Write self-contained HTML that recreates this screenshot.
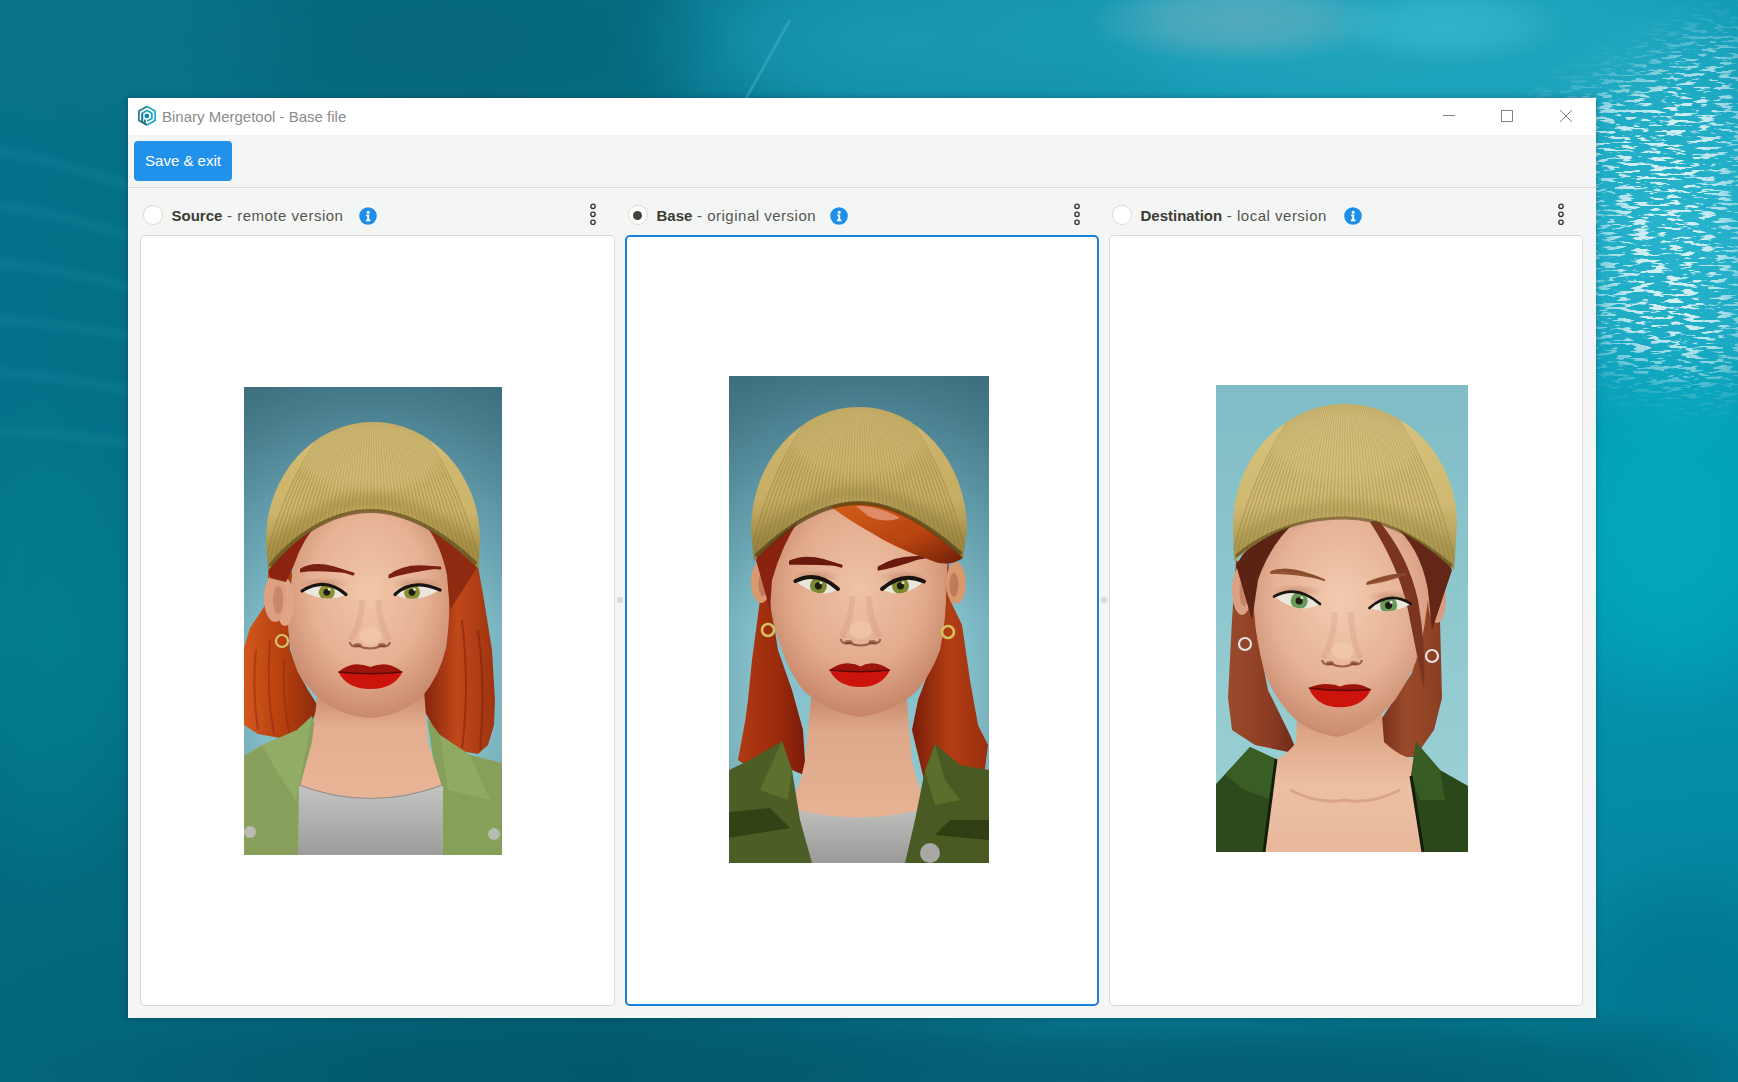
<!DOCTYPE html>
<html><head><meta charset="utf-8">
<style>
*{margin:0;padding:0;box-sizing:border-box}
html,body{width:1738px;height:1082px;overflow:hidden}
body{position:relative;font-family:"Liberation Sans",sans-serif;background:#0c6a80}
.abs{position:absolute}
#bg{left:0;top:0;width:1738px;height:1082px}
#win{left:128px;top:98px;width:1468px;height:920px;background:#f4f6f5;box-shadow:0 0 6px rgba(0,30,40,.35)}
#title{left:0;top:0;width:1468px;height:37px;background:#fff}
#ttext{left:34px;top:10px;font-size:15px;color:#8c8c8c;white-space:nowrap;letter-spacing:0}
#btn{left:6px;top:43px;width:98px;height:40px;background:#2192ec;border-radius:4px;color:#fff;font-size:15px;line-height:40px;text-align:center}
#sep{left:0;top:89px;width:1468px;height:1px;background:#dadada}
.panel{top:137px;height:771px;width:475px;background:#fff;border:1px solid #d9d9d9;border-radius:5px}
.hdr{top:108px;height:24px;line-height:20px;font-size:15px;color:#55554d;white-space:nowrap}
.hdr b{color:#3b3b33}
.hdr .rg{font-size:15px;letter-spacing:0.5px}
.radio{width:20px;height:20px;border-radius:50%;border:1px solid #dcdad0;background:#fff}
.info{width:18px;height:18px;border-radius:50%;background:#1f8ee8}
.grip{width:6px;height:6px;border-radius:50%;background:#d6d6d6}
</style></head><body>
<svg id="bg" class="abs" width="1738" height="1082" viewBox="0 0 1738 1082">
<defs>
<filter id="foam" x="0" y="0" width="100%" height="100%">
<feTurbulence type="fractalNoise" baseFrequency="0.06 0.3" numOctaves="3" seed="5" result="n"/>
<feColorMatrix in="n" type="matrix" values="0 0 0 0 1  0 0 0 0 1  0 0 0 0 1  0 0 0 12 -6.4" result="m"/>
<feComposite in="m" in2="SourceGraphic" operator="in"/>
</filter>
<filter id="wblur" x="-20%" y="-50%" width="140%" height="200%"><feGaussianBlur stdDeviation="3"/></filter>
<filter id="mblur" x="-30%" y="-30%" width="160%" height="160%"><feGaussianBlur stdDeviation="25"/></filter>
<linearGradient id="bgH" x1="0" y1="0" x2="1" y2="0"><stop offset="0" stop-color="#04728a"/><stop offset=".35" stop-color="#046c82"/><stop offset=".6" stop-color="#0a84a0"/><stop offset=".85" stop-color="#0694b0"/><stop offset="1" stop-color="#0492ae"/></linearGradient>
<linearGradient id="bgV" x1="0" y1="0" x2="0" y2="1"><stop offset="0" stop-color="#000" stop-opacity="0"/><stop offset=".6" stop-color="#000" stop-opacity="0"/><stop offset="1" stop-color="#00303a" stop-opacity=".18"/></linearGradient>
<mask id="foamMask" maskUnits="userSpaceOnUse" x="1300" y="0" width="438" height="500"><g filter="url(#mblur)"><path d="M1520 140 L1738 30 L1738 130 L1600 170 Z" fill="#fff"/><path d="M1600 110 L1738 90 L1738 380 L1600 360 Z" fill="#fff"/></g></mask>
<radialGradient id="b1"><stop offset="0" stop-color="#22a6be" stop-opacity="1"/><stop offset=".5" stop-color="#22a6be" stop-opacity="0.75"/><stop offset="1" stop-color="#22a6be" stop-opacity="0"/></radialGradient><radialGradient id="b2"><stop offset="0" stop-color="#1a9cb4" stop-opacity="0.9"/><stop offset=".5" stop-color="#1a9cb4" stop-opacity="0.675"/><stop offset="1" stop-color="#1a9cb4" stop-opacity="0"/></radialGradient><radialGradient id="b3"><stop offset="0" stop-color="#07667c" stop-opacity="0.9"/><stop offset=".5" stop-color="#07667c" stop-opacity="0.675"/><stop offset="1" stop-color="#07667c" stop-opacity="0"/></radialGradient><radialGradient id="b4"><stop offset="0" stop-color="#0d728a" stop-opacity="0.8"/><stop offset=".5" stop-color="#0d728a" stop-opacity="0.6000000000000001"/><stop offset="1" stop-color="#0d728a" stop-opacity="0"/></radialGradient><radialGradient id="b5"><stop offset="0" stop-color="#2cb8d0" stop-opacity="0.9"/><stop offset=".5" stop-color="#2cb8d0" stop-opacity="0.675"/><stop offset="1" stop-color="#2cb8d0" stop-opacity="0"/></radialGradient><radialGradient id="b6"><stop offset="0" stop-color="#02566a" stop-opacity="0.8"/><stop offset=".5" stop-color="#02566a" stop-opacity="0.6000000000000001"/><stop offset="1" stop-color="#02566a" stop-opacity="0"/></radialGradient><radialGradient id="b7"><stop offset="0" stop-color="#006e88" stop-opacity="0.6"/><stop offset=".5" stop-color="#006e88" stop-opacity="0.44999999999999996"/><stop offset="1" stop-color="#006e88" stop-opacity="0"/></radialGradient><radialGradient id="b8"><stop offset="0" stop-color="#02808f" stop-opacity="0.7"/><stop offset=".5" stop-color="#02808f" stop-opacity="0.5249999999999999"/><stop offset="1" stop-color="#02808f" stop-opacity="0"/></radialGradient><radialGradient id="b9"><stop offset="0" stop-color="#6aaebe" stop-opacity="0.7"/><stop offset=".5" stop-color="#6aaebe" stop-opacity="0.5249999999999999"/><stop offset="1" stop-color="#6aaebe" stop-opacity="0"/></radialGradient><radialGradient id="b12"><stop offset="0" stop-color="#3cbcd2" stop-opacity="0.6"/><stop offset=".5" stop-color="#3cbcd2" stop-opacity="0.44999999999999996"/><stop offset="1" stop-color="#3cbcd2" stop-opacity="0"/></radialGradient><radialGradient id="b11"><stop offset="0" stop-color="#02aac0" stop-opacity="0.9"/><stop offset=".5" stop-color="#02aac0" stop-opacity="0.675"/><stop offset="1" stop-color="#02aac0" stop-opacity="0"/></radialGradient>
</defs>
<rect width="1738" height="1082" fill="url(#bgH)"/>
<rect width="1738" height="1082" fill="url(#bgV)"/>
<ellipse cx="1400" cy="30" rx="500" ry="150" fill="url(#b1)"/><ellipse cx="900" cy="40" rx="280" ry="110" fill="url(#b2)"/><ellipse cx="430" cy="40" rx="300" ry="110" fill="url(#b3)"/><ellipse cx="100" cy="40" rx="220" ry="110" fill="url(#b4)"/><ellipse cx="1680" cy="230" rx="190" ry="230" fill="url(#b5)"/><ellipse cx="700" cy="1070" rx="700" ry="70" fill="url(#b6)"/><ellipse cx="1690" cy="990" rx="150" ry="140" fill="url(#b7)"/><ellipse cx="1400" cy="1082" rx="420" ry="90" fill="url(#b6)"/><ellipse cx="50" cy="640" rx="120" ry="260" fill="url(#b8)"/><ellipse cx="1240" cy="20" rx="150" ry="45" fill="url(#b9)"/><ellipse cx="1450" cy="25" rx="120" ry="40" fill="url(#b12)"/><ellipse cx="1670" cy="520" rx="160" ry="200" fill="url(#b11)"/>
<rect x="1300" y="0" width="438" height="500" fill="#fff" filter="url(#foam)" mask="url(#foamMask)" opacity=".8"/>
<path d="M745 100 L790 20" stroke="#4ab4c8" stroke-width="3" opacity=".45"/>
<g fill="none" stroke="#2e9cb2" stroke-width="9" opacity=".16" filter="url(#wblur)"><path d="M-10 150 Q60 160 140 190"/><path d="M-10 205 Q60 212 140 240"/><path d="M-10 262 Q60 268 140 290"/><path d="M-10 320 Q60 322 140 338"/><path d="M-10 372 Q60 376 140 392"/><path d="M-10 430 Q60 432 140 445"/></g>
</svg>

<div id="win" class="abs">
  <div id="title" class="abs">
    <svg class="abs" style="left:6px;top:4px" width="28" height="28" viewBox="0 0 28 28"><g fill="none" stroke-width="1.7" stroke-linejoin="round"><path d="M13 4.6L21.1 8.9V18.4L13 22.9" stroke="#1aaac8"/><path d="M13 4.6L4.9 8.9V18.4L13 22.9" stroke="#257a8c"/><path d="M8.3 20V11.2L13 8.6L17.9 11.2V16.4L13 19" stroke="#1ba3c2"/><path d="M8.3 11.2V20L13 22.9" stroke="#2a6d7e"/><path d="M10.9 17.6V21.4" stroke="#2a6d7e"/></g><circle cx="12.8" cy="14" r="2.4" fill="#0f86b0"/></svg>
    <div id="ttext" class="abs">Binary Mergetool - Base file</div>
    <svg class="abs" style="left:1310px;top:8px" width="150" height="20" viewBox="0 0 150 20"><g fill="none" stroke="#838383" stroke-width="1"><path d="M5 9.5H17"/><rect x="63.5" y="4.5" width="11" height="11"/><path d="M122 4L134 16M134 4L122 16"/></g></svg>
  </div>
  <div id="btn" class="abs">Save &amp; exit</div>
  <div id="sep" class="abs"></div>

  <div class="panel abs" style="left:12px;width:475px"></div>
  <div class="panel abs" style="left:497px;width:474px;border:2px solid #1a7fd8"></div>
  <div class="panel abs" style="left:981px;width:474px"></div>

  <div class="radio abs" style="left:14.5px;top:107px"></div>
  <div class="hdr abs" style="left:43.5px"><b>Source</b><span class="rg"> - remote version</span></div>
  <svg class="abs" style="left:231px;top:109px" width="18" height="18" viewBox="0 0 18 18"><circle cx="9" cy="9" r="8.8" fill="#1f8ee8"/><circle cx="9.2" cy="5.2" r="1.5" fill="#fff"/><path d="M7.2 7.6h3v5h1.2v1.6H7v-1.6h1.2v-3.4h-1z" fill="#fff"/></svg>
  <svg class="abs" style="left:459px;top:105px" width="12" height="22" viewBox="0 0 12 22"><g fill="none" stroke="#3a3a33" stroke-width="1.4"><circle cx="6" cy="3.3" r="2.2"/><circle cx="6" cy="11.3" r="2.2"/><circle cx="6" cy="19.3" r="2.2"/></g></svg>

  <div class="radio abs" style="left:499.5px;top:107px"><div class="abs" style="left:4.5px;top:4.5px;width:9px;height:9px;border-radius:50%;background:#43433a"></div></div>
  <div class="hdr abs" style="left:528.5px"><b>Base</b><span class="rg"> - original version</span></div>
  <svg class="abs" style="left:702px;top:109px" width="18" height="18" viewBox="0 0 18 18"><circle cx="9" cy="9" r="8.8" fill="#1f8ee8"/><circle cx="9.2" cy="5.2" r="1.5" fill="#fff"/><path d="M7.2 7.6h3v5h1.2v1.6H7v-1.6h1.2v-3.4h-1z" fill="#fff"/></svg>
  <svg class="abs" style="left:943px;top:105px" width="12" height="22" viewBox="0 0 12 22"><g fill="none" stroke="#3a3a33" stroke-width="1.4"><circle cx="6" cy="3.3" r="2.2"/><circle cx="6" cy="11.3" r="2.2"/><circle cx="6" cy="19.3" r="2.2"/></g></svg>

  <div class="radio abs" style="left:983.5px;top:107px"></div>
  <div class="hdr abs" style="left:1012.5px"><b>Destination</b><span class="rg"> - local version</span></div>
  <svg class="abs" style="left:1216px;top:109px" width="18" height="18" viewBox="0 0 18 18"><circle cx="9" cy="9" r="8.8" fill="#1f8ee8"/><circle cx="9.2" cy="5.2" r="1.5" fill="#fff"/><path d="M7.2 7.6h3v5h1.2v1.6H7v-1.6h1.2v-3.4h-1z" fill="#fff"/></svg>
  <svg class="abs" style="left:1427px;top:105px" width="12" height="22" viewBox="0 0 12 22"><g fill="none" stroke="#3a3a33" stroke-width="1.4"><circle cx="6" cy="3.3" r="2.2"/><circle cx="6" cy="11.3" r="2.2"/><circle cx="6" cy="19.3" r="2.2"/></g></svg>

  <div class="grip abs" style="left:489px;top:499px"></div>
  <div class="grip abs" style="left:973px;top:499px"></div>
</div>
<!--PORTRAITS-->
<svg class="abs" style="left:244px;top:387px" width="258" height="468" viewBox="244 387 258 468">
<defs><filter id="soft1" x="-30%" y="-30%" width="160%" height="160%"><feGaussianBlur stdDeviation="5"/></filter><radialGradient id="eyesh"><stop offset="0" stop-color="#a8684e" stop-opacity=".45"/><stop offset="1" stop-color="#a8684e" stop-opacity="0"/></radialGradient><clipPath id="p1hatclip"><path d="M266 540 A107 118 0 0 1 480 540 L478.5 569 C450 540 410 511 371 511 C330 511 292 540 268 571 Z"/></clipPath>
<linearGradient id="p1bg" x1="0" y1="0" x2="0" y2="1"><stop offset="0" stop-color="#4a8090"/><stop offset=".25" stop-color="#68a4b4"/><stop offset=".5" stop-color="#82bfca"/><stop offset="1" stop-color="#92cbd3"/></linearGradient>
<radialGradient id="p1vig" cx=".5" cy=".55" r=".7"><stop offset=".55" stop-color="#234a58" stop-opacity="0"/><stop offset="1" stop-color="#234a58" stop-opacity=".3"/></radialGradient>
<linearGradient id="p1hair" x1="0" y1="0" x2="1" y2="0"><stop offset="0" stop-color="#d2581c"/><stop offset=".5" stop-color="#b8400f"/><stop offset="1" stop-color="#8a2a0c"/></linearGradient>
<linearGradient id="p1hairR" x1="0" y1="0" x2="1" y2="0"><stop offset="0" stop-color="#7e1e0a"/><stop offset=".5" stop-color="#c0481a"/><stop offset="1" stop-color="#9e3410"/></linearGradient>
<radialGradient id="p1skin" cx=".5" cy=".4" r=".6"><stop offset="0" stop-color="#f1c7a9"/><stop offset=".6" stop-color="#e6b093"/><stop offset="1" stop-color="#c98a6c"/></radialGradient>
<linearGradient id="p1hat" x1="0" y1="0" x2="0" y2="1"><stop offset="0" stop-color="#d2ba72"/><stop offset=".6" stop-color="#ccb46a"/><stop offset="1" stop-color="#9c8640"/></linearGradient>
<linearGradient id="p1neck" x1="0" y1="0" x2="0" y2="1"><stop offset="0" stop-color="#c98a6c"/><stop offset=".3" stop-color="#e4ad90"/><stop offset="1" stop-color="#eab698"/></linearGradient>
<linearGradient id="p1shirt" x1="0" y1="0" x2="0" y2="1"><stop offset="0" stop-color="#c4c4c2"/><stop offset="1" stop-color="#9c9c9a"/></linearGradient>
<pattern id="rib" width="7" height="20" patternUnits="userSpaceOnUse"><rect width="7" height="20" fill="none"/><rect x="0" width="2" height="20" fill="#8a7030" opacity=".15"/></pattern>
</defs>
<rect x="244" y="387" width="258" height="468" fill="url(#p1bg)"/>
<rect x="244" y="387" width="258" height="468" fill="url(#p1vig)"/>
<!-- hair back -->
<path d="M285 520 L268 566 L268 600 L262 610 L250 628 L244 648 L244 725 L258 734 L280 738 L300 739 L312 722 L318 706 L308 690 L298 672 L290 650 L288 620 L292 575 Z" fill="url(#p1hair)"/>
<g stroke="#8e2a0c" stroke-width="2" opacity=".5" fill="none"><path d="M256 650 Q252 690 258 730"/><path d="M270 640 Q266 690 274 735"/><path d="M284 660 Q282 700 290 736"/></g>
<path d="M440 520 L478 566 L484 600 L492 650 L495 700 L494 725 L488 745 L478 754 L455 750 L438 735 L425 712 L420 700 L446 648 L449 600 L445 560 Z" fill="url(#p1hairR)"/>
<g stroke="#7a1e0a" stroke-width="2" opacity=".5" fill="none"><path d="M462 620 Q470 690 462 748"/><path d="M478 630 Q486 690 480 750"/></g>
<!-- jacket -->
<path d="M244 756 L262 745 L297 730 L312 716 L318 740 L306 790 L299 855 L244 855 Z" fill="#88a05c"/>
<path d="M427 718 L440 735 L470 755 L502 763 L502 855 L443 855 L438 790 Z" fill="#86a05a"/>
<path d="M262 745 L297 730 L312 716 L304 760 L296 800 L276 770 Z" fill="#9ab46c" opacity=".6"/><path d="M440 735 L470 755 L490 800 L448 790 Z" fill="#9ab46c" opacity=".5"/><circle cx="250" cy="832" r="6" fill="#b8bcb0"/><circle cx="494" cy="834" r="6" fill="#b8bcb0"/>
<!-- neck -->
<path d="M318 690 L424 690 L428 742 L443 790 L443 815 L299 815 L299 790 L312 742 Z" fill="url(#p1neck)"/>
<!-- shirt -->
<path d="M299 785 Q370 812 443 785 L443 855 L298 855 Z" fill="url(#p1shirt)"/>
<path d="M299 785 Q370 812 443 785" fill="none" stroke="#8e8e8c" stroke-width="1.2"/>
<!-- face -->
<path d="M296 530 Q330 505 371 505 Q412 505 446 530 L449 600 Q450 620 446 648 Q440 675 422 697 Q400 716 370 718 Q345 717 322 701 Q308 690 298 672 Q290 655 288 624 Z" fill="url(#p1skin)"/>
<!-- ear -->
<ellipse cx="285" cy="602" rx="9" ry="24" fill="#e0a586"/><ellipse cx="275" cy="598" rx="11" ry="24" fill="#dc9f80"/>
<ellipse cx="278" cy="600" rx="5" ry="14" fill="#c9866a"/>
<circle cx="282" cy="641" r="6" fill="none" stroke="#d8c46a" stroke-width="2.2"/>
<!-- hair under hat left/right darker -->
<path d="M268 566 Q275 548 300 528 L320 520 Q302 540 294 565 L286 582 L270 578 Z" fill="#8a2410"/>
<path d="M478 566 Q470 545 440 524 L420 518 Q440 540 447 575 L450 610 Z" fill="#8e2a10"/>
<!-- eyebrows -->
<path d="M300 569 Q318 557.0 354 574 Q318 569.5 300 572.5 Z" fill="#7a2010" opacity="1"/><path d="M302 569.5 Q318 562 353 574" fill="none" stroke="#7a2010" stroke-width="3.0" stroke-linecap="round" opacity="1"/><path d="M388.5 575 Q408 560.0 441 568 Q408 572.5 388.5 578.5 Z" fill="#7a2010" opacity="1"/><path d="M390.5 575.5 Q408 565 440 568" fill="none" stroke="#7a2010" stroke-width="3.0" stroke-linecap="round" opacity="1"/>
<!-- eyes -->
<clipPath id="e11"><path d="M302 591 Q325.4 576.2 346 594.5 Q326.0 604.2 302 591 Z"/></clipPath><ellipse cx="324.0" cy="583.5" rx="25.5" ry="7" fill="url(#eyesh)"/><path d="M302 591 Q325.4 576.2 346 594.5 Q326.0 604.2 302 591 Z" fill="#e9e6de"/><g clip-path="url(#e11)"><circle cx="326.8" cy="592.3" r="8" fill="#8c9032"/><circle cx="326.8" cy="592.3" r="3.4" fill="#1c1c10"/><circle cx="329.2" cy="589.5" r="1.4" fill="#fff" opacity=".8"/></g><path d="M302 591 Q325.4 576.2 346 594.5" fill="none" stroke="#1a1410" stroke-width="3.2" stroke-linecap="round"/><clipPath id="e12"><path d="M395 594.5 Q412.1 577.8 440 590 Q414.5 604.8 395 594.5 Z"/></clipPath><ellipse cx="417.5" cy="584.0" rx="26.1" ry="7" fill="url(#eyesh)"/><path d="M395 594.5 Q412.1 577.8 440 590 Q414.5 604.8 395 594.5 Z" fill="#e9e6de"/><g clip-path="url(#e12)"><circle cx="412" cy="592.3" r="8" fill="#8c9032"/><circle cx="412" cy="592.3" r="3.4" fill="#1c1c10"/><circle cx="414.4" cy="589.5" r="1.4" fill="#fff" opacity=".8"/></g><path d="M395 594.5 Q412.1 577.8 440 590" fill="none" stroke="#1a1410" stroke-width="3.2" stroke-linecap="round"/>
<!-- nose -->
<path d="M362.4 600 Q361.4 623 350.6 640" fill="none" stroke="#b8785c" stroke-width="6" opacity=".16"/><path d="M378.4 600 Q379.4 623 389 640" fill="none" stroke="#b8785c" stroke-width="6" opacity=".16"/><ellipse cx="370.4" cy="636" rx="11" ry="9" fill="#f4cdb0" opacity=".55"/><path d="M349.6 642 Q351.6 648 358.6 646 Q370.4 651 381 646 Q388 648 390 642" fill="none" stroke="#8a4a36" stroke-width="2.2" opacity=".8"/><ellipse cx="357.6" cy="645" rx="4" ry="2" fill="#6a3020" opacity=".55"/><ellipse cx="382" cy="645" rx="4" ry="2" fill="#6a3020" opacity=".55"/>
<!-- lips -->
<path d="M338.5 672 Q370.4 674.0 402.3 672 Q394.3 689.0 370.4 689 Q346.5 689.0 338.5 672 Z" fill="#cc140c"/><path d="M338.5 672 Q348.8 663.4 359 664.4 Q364.7 664.4 370.4 667 Q375.9 664.4 381.5 664.4 Q391.9 663.4 402.3 672 Q370.4 675.5 338.5 672 Z" fill="#9c140c"/><path d="M338.5 672 Q370.4 675.5 402.3 672" fill="none" stroke="#5a0806" stroke-width="1.6"/>
<!-- hat -->
<path d="M266 540 A107 118 0 0 1 480 540 L478.5 569 C450 540 410 511 371 511 C330 511 292 540 268 571 Z" fill="url(#p1hat)"/>
<g clip-path="url(#p1hatclip)" stroke="#7a6428" stroke-width="1.4" opacity="0.28" fill="none"><path d="M262.0 575 Q284.2 475.6 334.1 417"/><path d="M266.5 575 Q287.8 475.6 335.7 417"/><path d="M271.0 575 Q291.4 475.6 337.3 417"/><path d="M275.5 575 Q295.0 475.6 338.9 417"/><path d="M280.0 575 Q298.6 475.6 340.4 417"/><path d="M284.5 575 Q302.2 475.6 342.0 417"/><path d="M289.0 575 Q305.8 475.6 343.6 417"/><path d="M293.5 575 Q309.4 475.6 345.2 417"/><path d="M298.0 575 Q313.0 475.6 346.8 417"/><path d="M302.5 575 Q316.6 475.6 348.3 417"/><path d="M307.0 575 Q320.2 475.6 349.9 417"/><path d="M311.5 575 Q323.8 475.6 351.5 417"/><path d="M316.0 575 Q327.4 475.6 353.1 417"/><path d="M320.5 575 Q331.0 475.6 354.6 417"/><path d="M325.0 575 Q334.6 475.6 356.2 417"/><path d="M329.5 575 Q338.2 475.6 357.8 417"/><path d="M334.0 575 Q341.8 475.6 359.4 417"/><path d="M338.5 575 Q345.4 475.6 360.9 417"/><path d="M343.0 575 Q349.0 475.6 362.5 417"/><path d="M347.5 575 Q352.6 475.6 364.1 417"/><path d="M352.0 575 Q356.2 475.6 365.6 417"/><path d="M356.5 575 Q359.8 475.6 367.2 417"/><path d="M361.0 575 Q363.4 475.6 368.8 417"/><path d="M365.5 575 Q367.0 475.6 370.4 417"/><path d="M370.0 575 Q370.6 475.6 371.9 417"/><path d="M374.5 575 Q374.2 475.6 373.5 417"/><path d="M379.0 575 Q377.8 475.6 375.1 417"/><path d="M383.5 575 Q381.4 475.6 376.7 417"/><path d="M388.0 575 Q385.0 475.6 378.2 417"/><path d="M392.5 575 Q388.6 475.6 379.8 417"/><path d="M397.0 575 Q392.2 475.6 381.4 417"/><path d="M401.5 575 Q395.8 475.6 383.0 417"/><path d="M406.0 575 Q399.4 475.6 384.6 417"/><path d="M410.5 575 Q403.0 475.6 386.1 417"/><path d="M415.0 575 Q406.6 475.6 387.7 417"/><path d="M419.5 575 Q410.2 475.6 389.3 417"/><path d="M424.0 575 Q413.8 475.6 390.9 417"/><path d="M428.5 575 Q417.4 475.6 392.4 417"/><path d="M433.0 575 Q421.0 475.6 394.0 417"/><path d="M437.5 575 Q424.6 475.6 395.6 417"/><path d="M442.0 575 Q428.2 475.6 397.1 417"/><path d="M446.5 575 Q431.8 475.6 398.7 417"/><path d="M451.0 575 Q435.4 475.6 400.3 417"/><path d="M455.5 575 Q439.0 475.6 401.9 417"/><path d="M460.0 575 Q442.6 475.6 403.4 417"/><path d="M464.5 575 Q446.2 475.6 405.0 417"/><path d="M469.0 575 Q449.8 475.6 406.6 417"/><path d="M473.5 575 Q453.4 475.6 408.2 417"/><path d="M478.0 575 Q457.0 475.6 409.8 417"/><path d="M482.5 575 Q460.6 475.6 411.3 417"/></g>
<g clip-path="url(#p1hatclip)"><g filter="url(#soft1)"><path d="M270 556 C292 528 330 501 371 501 C410 501 450 528 478 556" fill="none" stroke="#9a8038" stroke-width="16" opacity=".45"/></g></g>
<g clip-path="url(#p1hatclip)"><g filter="url(#soft1)"><ellipse cx="371" cy="455" rx="70" ry="35" fill="#d8c27e" opacity=".35"/></g></g>
<path d="M270 566 C292 538 330 511 371 511 C410 511 450 538 476 564" fill="none" stroke="#5e4a1a" stroke-width="4" opacity=".7"/>
</svg>
<svg class="abs" style="left:729px;top:376px" width="260" height="487" viewBox="729 376 260 487">
<defs><filter id="soft2" x="-30%" y="-30%" width="160%" height="160%"><feGaussianBlur stdDeviation="5"/></filter><clipPath id="p2hatclip"><path d="M751 530 A108 123 0 0 1 967 530 L963 558 C930 528 895 502 859 502 C820 502 784 528 754 561 Z"/></clipPath>
<linearGradient id="p2bg" x1="0" y1="0" x2="0" y2="1"><stop offset="0" stop-color="#487e8e"/><stop offset=".25" stop-color="#66a2b2"/><stop offset=".5" stop-color="#82bfca"/><stop offset="1" stop-color="#93cbd3"/></linearGradient>
<radialGradient id="p2vig" cx=".5" cy=".55" r=".7"><stop offset=".55" stop-color="#234a58" stop-opacity="0"/><stop offset="1" stop-color="#234a58" stop-opacity=".3"/></radialGradient>
<linearGradient id="p2hairL" x1="0" y1="0" x2="1" y2="0"><stop offset="0" stop-color="#b03a12"/><stop offset=".6" stop-color="#9a2a0c"/><stop offset="1" stop-color="#7a1a08"/></linearGradient>
<linearGradient id="p2hairR" x1="0" y1="0" x2="1" y2="0"><stop offset="0" stop-color="#7a1c08"/><stop offset=".5" stop-color="#b23e14"/><stop offset="1" stop-color="#9a2e0e"/></linearGradient>
<radialGradient id="p2skin" cx=".5" cy=".4" r=".6"><stop offset="0" stop-color="#efc3a5"/><stop offset=".6" stop-color="#e3ab8e"/><stop offset="1" stop-color="#c58466"/></radialGradient>
<linearGradient id="p2hat" x1="0" y1="0" x2="0" y2="1"><stop offset="0" stop-color="#ccb46c"/><stop offset=".6" stop-color="#c6ae64"/><stop offset="1" stop-color="#927c3a"/></linearGradient>
<linearGradient id="p2neck" x1="0" y1="0" x2="0" y2="1"><stop offset="0" stop-color="#c4866a"/><stop offset=".3" stop-color="#dfa88a"/><stop offset="1" stop-color="#e8b496"/></linearGradient>
<linearGradient id="p2shirt" x1="0" y1="0" x2="0" y2="1"><stop offset="0" stop-color="#c0c0be"/><stop offset="1" stop-color="#9a9a98"/></linearGradient>
<linearGradient id="p2bang" x1="0" y1="0" x2="1" y2="1"><stop offset="0" stop-color="#d4601c"/><stop offset=".6" stop-color="#b8440f"/><stop offset="1" stop-color="#6e1e08"/></linearGradient>
</defs>
<rect x="729" y="376" width="260" height="487" fill="url(#p2bg)"/>
<rect x="729" y="376" width="260" height="487" fill="url(#p2vig)"/>
<!-- hair back -->
<path d="M757 550 L760 600 L752 660 L748 700 L745 722 L738 760 L750 768 L765 766 L780 775 L792 770 L806 776 L803 730 L792 690 L778 650 L770 600 L768 560 Z" fill="url(#p2hairL)"/>
<path d="M948 550 L950 600 L962 625 L970 680 L978 725 L988 745 L984 776 L962 772 L940 778 L924 780 L912 730 L918 700 L930 668 L944 625 Z" fill="url(#p2hairR)"/>
<!-- neck -->
<path d="M812 690 L906 690 L912 760 Q918 790 930 807 L930 830 L787 830 L787 807 Q800 790 805 760 Z" fill="url(#p2neck)"/>
<!-- shirt -->
<path d="M787 807 Q859 828 930 807 L930 863 L787 863 Z" fill="url(#p2shirt)"/>
<!-- jacket -->
<path d="M729 770 L750 760 L782 741 L792 770 L800 820 L812 863 L729 863 Z" fill="#4c5e25"/>
<path d="M782 741 L792 770 L788 800 L760 790 Z" fill="#63742f" opacity=".8"/>
<path d="M729 812 L770 808 L790 828 L729 838 Z" fill="#22300c" opacity=".6"/>
<path d="M935 744 L960 765 L989 770 L989 863 L905 863 L915 820 L925 770 Z" fill="#495b23"/>
<path d="M935 744 L945 780 L960 800 L935 805 L925 772 Z" fill="#62732d" opacity=".8"/>
<path d="M989 820 L950 820 L935 835 L989 840 Z" fill="#1f2c0a" opacity=".6"/>
<circle cx="930" cy="853" r="10" fill="#a8a8a6"/>
<!-- face -->
<path d="M770 530 Q810 502 859 502 Q908 502 948 530 L946 600 Q945 625 940 650 Q932 672 918 690 Q895 712 860 717 Q825 712 803 690 Q789 672 782 650 Q772 625 770 600 Z" fill="url(#p2skin)"/>
<!-- ears -->
<ellipse cx="761" cy="582" rx="10" ry="21" fill="#d9996e" />
<ellipse cx="763" cy="584" rx="4.5" ry="12" fill="#c07a5c"/>
<ellipse cx="956" cy="583" rx="10" ry="21" fill="#d9996e"/>
<ellipse cx="954" cy="585" rx="4.5" ry="12" fill="#c07a5c"/>
<circle cx="768" cy="630" r="6" fill="none" stroke="#d6c062" stroke-width="2.6"/>
<circle cx="948" cy="632" r="6" fill="none" stroke="#d6c062" stroke-width="2.6"/>
<!-- under-hat hair left -->
<path d="M756 560 Q765 535 790 520 L800 518 Q782 545 772 580 L770 610 Z" fill="#8a2210"/>
<!-- eyebrows -->
<path d="M789 561 Q809.6 550.5 842 566 Q809.6 564.25 789 564.85 Z" fill="#6a1a0c" opacity="1"/><path d="M791 561.5 Q809.6 556 841 566" fill="none" stroke="#6a1a0c" stroke-width="3.3" stroke-linecap="round" opacity="1"/><path d="M877.6 567 Q898 553.5 925 557 Q898 567.25 877.6 570.85 Z" fill="#6a1a0c" opacity="1"/><path d="M879.6 567.5 Q898 559 924 557" fill="none" stroke="#6a1a0c" stroke-width="3.3" stroke-linecap="round" opacity="1"/>
<!-- eyes -->
<clipPath id="e21"><path d="M795.5 581 Q817.2 570.0 838 589 Q819.2 601.0 795.5 581 Z"/></clipPath><ellipse cx="816.8" cy="576.5" rx="24.6" ry="7" fill="url(#eyesh)"/><path d="M795.5 581 Q817.2 570.0 838 589 Q819.2 601.0 795.5 581 Z" fill="#e9e6de"/><g clip-path="url(#e21)"><circle cx="818.4" cy="585.8" r="8.5" fill="#7e8a32"/><circle cx="818.4" cy="585.8" r="3.6" fill="#1c1c10"/><circle cx="820.9" cy="582.8" r="1.5" fill="#fff" opacity=".8"/></g><path d="M795.5 581 Q817.2 570.0 838 589" fill="none" stroke="#1a1410" stroke-width="4" stroke-linecap="round"/><clipPath id="e22"><path d="M882 589 Q902.4 571.2 924 581.5 Q901.0 600.8 882 589 Z"/></clipPath><ellipse cx="903.0" cy="577.2" rx="24.4" ry="7" fill="url(#eyesh)"/><path d="M882 589 Q902.4 571.2 924 581.5 Q901.0 600.8 882 589 Z" fill="#e9e6de"/><g clip-path="url(#e22)"><circle cx="900.5" cy="585.8" r="8.5" fill="#7e8a32"/><circle cx="900.5" cy="585.8" r="3.6" fill="#1c1c10"/><circle cx="903.0" cy="582.8" r="1.5" fill="#fff" opacity=".8"/></g><path d="M882 589 Q902.4 571.2 924 581.5" fill="none" stroke="#1a1410" stroke-width="4" stroke-linecap="round"/>
<!-- nose -->
<path d="M852.6 596 Q851.6 620 841.6 637" fill="none" stroke="#b8785c" stroke-width="6" opacity=".16"/><path d="M868.6 596 Q869.6 620 879.5 637" fill="none" stroke="#b8785c" stroke-width="6" opacity=".16"/><ellipse cx="860.6" cy="630" rx="11" ry="9" fill="#f4cdb0" opacity=".55"/><path d="M840.6 639 Q842.6 645 849.6 643 Q860.6 648 871.5 643 Q878.5 645 880.5 639" fill="none" stroke="#8a4a36" stroke-width="2.2" opacity=".8"/><ellipse cx="848.6" cy="642" rx="4" ry="2" fill="#6a3020" opacity=".55"/><ellipse cx="872.5" cy="642" rx="4" ry="2" fill="#6a3020" opacity=".55"/>
<!-- lips -->
<path d="M829.5 670 Q860.6 672.0 890 670 Q882.0 687.0 860.6 687 Q837.5 687.0 829.5 670 Z" fill="#cc140c"/><path d="M829.5 670 Q839.5 662.4 849.5 663.4 Q855.0 663.4 860.6 666.4 Q865.3 663.4 870 663.4 Q880.0 662.4 890 670 Q860.6 673.5 829.5 670 Z" fill="#9c140c"/><path d="M829.5 670 Q860.6 673.5 890 670" fill="none" stroke="#5a0806" stroke-width="1.6"/>
<!-- bangs -->
<path d="M826 503 Q880 498 930 512 Q958 525 963 558 Q948 568 930 560 Q895 548 870 532 Q845 518 826 503 Z" fill="url(#p2bang)"/>
<path d="M856 506 Q880 506 900 518 Q885 524 868 516 Z" fill="#e39a7a" opacity=".8"/>
<!-- hat -->
<path d="M751 530 A108 123 0 0 1 967 530 L963 558 C930 528 895 502 859 502 C820 502 784 528 754 561 Z" fill="url(#p2hat)"/>
<g clip-path="url(#p2hatclip)" stroke="#7a6428" stroke-width="1.4" opacity="0.28" fill="none"><path d="M748.0 565 Q770.2 462.3 820.1 402"/><path d="M752.5 565 Q773.8 462.3 821.7 402"/><path d="M757.0 565 Q777.4 462.3 823.3 402"/><path d="M761.5 565 Q781.0 462.3 824.9 402"/><path d="M766.0 565 Q784.6 462.3 826.5 402"/><path d="M770.5 565 Q788.2 462.3 828.0 402"/><path d="M775.0 565 Q791.8 462.3 829.6 402"/><path d="M779.5 565 Q795.4 462.3 831.2 402"/><path d="M784.0 565 Q799.0 462.3 832.8 402"/><path d="M788.5 565 Q802.6 462.3 834.3 402"/><path d="M793.0 565 Q806.2 462.3 835.9 402"/><path d="M797.5 565 Q809.8 462.3 837.5 402"/><path d="M802.0 565 Q813.4 462.3 839.0 402"/><path d="M806.5 565 Q817.0 462.3 840.6 402"/><path d="M811.0 565 Q820.6 462.3 842.2 402"/><path d="M815.5 565 Q824.2 462.3 843.8 402"/><path d="M820.0 565 Q827.8 462.3 845.4 402"/><path d="M824.5 565 Q831.4 462.3 846.9 402"/><path d="M829.0 565 Q835.0 462.3 848.5 402"/><path d="M833.5 565 Q838.6 462.3 850.1 402"/><path d="M838.0 565 Q842.2 462.3 851.6 402"/><path d="M842.5 565 Q845.8 462.3 853.2 402"/><path d="M847.0 565 Q849.4 462.3 854.8 402"/><path d="M851.5 565 Q853.0 462.3 856.4 402"/><path d="M856.0 565 Q856.6 462.3 858.0 402"/><path d="M860.5 565 Q860.2 462.3 859.5 402"/><path d="M865.0 565 Q863.8 462.3 861.1 402"/><path d="M869.5 565 Q867.4 462.3 862.7 402"/><path d="M874.0 565 Q871.0 462.3 864.2 402"/><path d="M878.5 565 Q874.6 462.3 865.8 402"/><path d="M883.0 565 Q878.2 462.3 867.4 402"/><path d="M887.5 565 Q881.8 462.3 869.0 402"/><path d="M892.0 565 Q885.4 462.3 870.5 402"/><path d="M896.5 565 Q889.0 462.3 872.1 402"/><path d="M901.0 565 Q892.6 462.3 873.7 402"/><path d="M905.5 565 Q896.2 462.3 875.3 402"/><path d="M910.0 565 Q899.8 462.3 876.9 402"/><path d="M914.5 565 Q903.4 462.3 878.4 402"/><path d="M919.0 565 Q907.0 462.3 880.0 402"/><path d="M923.5 565 Q910.6 462.3 881.6 402"/><path d="M928.0 565 Q914.2 462.3 883.1 402"/><path d="M932.5 565 Q917.8 462.3 884.7 402"/><path d="M937.0 565 Q921.4 462.3 886.3 402"/><path d="M941.5 565 Q925.0 462.3 887.9 402"/><path d="M946.0 565 Q928.6 462.3 889.5 402"/><path d="M950.5 565 Q932.2 462.3 891.0 402"/><path d="M955.0 565 Q935.8 462.3 892.6 402"/><path d="M959.5 565 Q939.4 462.3 894.2 402"/><path d="M964.0 565 Q943.0 462.3 895.8 402"/><path d="M968.5 565 Q946.6 462.3 897.3 402"/></g>
<g clip-path="url(#p2hatclip)"><g filter="url(#soft2)"><path d="M756 546 C785 518 822 493 859 493 C896 493 932 518 963 546" fill="none" stroke="#95803a" stroke-width="16" opacity=".45"/></g></g>
<g clip-path="url(#p2hatclip)"><g filter="url(#soft2)"><ellipse cx="859" cy="440" rx="70" ry="35" fill="#d4bf7c" opacity=".3"/></g></g>
<path d="M756 556 C785 528 822 503 859 503 C896 503 932 528 961 554" fill="none" stroke="#4e3c12" stroke-width="4" opacity=".7"/>
</svg>
<svg class="abs" style="left:1216px;top:385px" width="252" height="467" viewBox="1216 385 252 467">
<defs><filter id="soft3" x="-30%" y="-30%" width="160%" height="160%"><feGaussianBlur stdDeviation="5"/></filter><clipPath id="p3hatclip"><path d="M1233 525 A112 121 0 0 1 1457 525 L1454 570 C1420 538 1385 517 1345 517 C1300 517 1262 535 1234 561 Z"/></clipPath>
<linearGradient id="p3bg" x1="0" y1="0" x2="0" y2="1"><stop offset="0" stop-color="#80bcc6"/><stop offset=".4" stop-color="#8cc6cc"/><stop offset="1" stop-color="#9ed2d6"/></linearGradient>
<linearGradient id="p3hairL" x1="0" y1="0" x2="1" y2="0"><stop offset="0" stop-color="#9a4a2c"/><stop offset=".6" stop-color="#8c3c22"/><stop offset="1" stop-color="#6a2816"/></linearGradient>
<linearGradient id="p3hairR" x1="0" y1="0" x2="1" y2="0"><stop offset="0" stop-color="#6e2a18"/><stop offset=".5" stop-color="#9a4a2a"/><stop offset="1" stop-color="#8a3e22"/></linearGradient>
<radialGradient id="p3skin" cx=".5" cy=".38" r=".62"><stop offset="0" stop-color="#f2ccb0"/><stop offset=".6" stop-color="#e6b296"/><stop offset="1" stop-color="#c88a6e"/></radialGradient>
<linearGradient id="p3hat" x1="0" y1="0" x2="0" y2="1"><stop offset="0" stop-color="#d6c27c"/><stop offset=".6" stop-color="#d0ba72"/><stop offset="1" stop-color="#a08e48"/></linearGradient>
<linearGradient id="p3chest" x1="0" y1="0" x2="0" y2="1"><stop offset="0" stop-color="#c8896c"/><stop offset=".3" stop-color="#e0a88a"/><stop offset=".6" stop-color="#ecc0a4"/><stop offset="1" stop-color="#e8b89c"/></linearGradient>
</defs>
<rect x="1216" y="385" width="252" height="467" fill="url(#p3bg)"/>
<!-- hair back -->
<path d="M1236 560 L1232 620 L1228 698 L1232 730 L1255 745 L1298 754 L1290 735 L1268 690 L1256 630 L1252 570 Z" fill="url(#p3hairL)"/>
<path d="M1428 560 L1440 620 L1442 698 L1434 730 L1415 757 L1372 757 L1382 718 L1412 673 L1424 625 Z" fill="url(#p3hairR)"/>
<!-- chest -->
<path d="M1298 690 L1380 690 L1384 742 Q1398 756 1416 760 L1423 852 L1264 852 L1276 760 Q1290 752 1296 742 Z" fill="url(#p3chest)"/>
<path d="M1290 790 Q1320 805 1345 800 Q1370 805 1400 790" fill="none" stroke="#c88a70" stroke-width="3" opacity=".5"/>
<!-- jacket -->
<path d="M1216 784 L1250 747 L1276 759 L1264 852 L1216 852 Z" fill="#2c4a1c"/>
<path d="M1250 747 L1276 759 L1272 800 L1245 790 L1225 775 Z" fill="#3c6228" opacity=".8"/>
<path d="M1416 742 L1440 770 L1468 786 L1468 852 L1423 852 L1411 776 Z" fill="#2a481a"/>
<path d="M1416 742 L1440 770 L1445 800 L1420 800 L1411 776 Z" fill="#3a6026" opacity=".8"/>
<path d="M1264 852 L1276 759" stroke="#141e0a" stroke-width="3"/>
<path d="M1423 852 L1411 776" stroke="#141e0a" stroke-width="3"/>
<!-- face -->
<path d="M1252 540 Q1290 517 1340 517 Q1395 517 1430 545 L1428 600 Q1425 625 1420 650 Q1412 675 1395 700 Q1370 730 1337 737 Q1305 732 1288 712 Q1270 690 1264 670 Q1256 640 1254 610 Z" fill="url(#p3skin)"/>
<!-- ears -->
<ellipse cx="1242" cy="590" rx="10" ry="25" fill="#dca184"/>
<ellipse cx="1244" cy="592" rx="4.5" ry="14" fill="#c4846a"/>
<ellipse cx="1437" cy="600" rx="9" ry="23" fill="#d89c80"/>
<circle cx="1245" cy="644" r="6" fill="none" stroke="#e4e4e4" stroke-width="2.2"/>
<circle cx="1432" cy="656" r="6" fill="none" stroke="#e4e4e4" stroke-width="2.2"/>
<!-- under-hat hair -->
<path d="M1236 565 Q1250 540 1275 527 L1295 522 Q1270 545 1258 580 L1252 620 Z" fill="#5c2214"/>
<path d="M1452 570 Q1440 545 1410 528 L1390 522 Q1420 545 1428 590 L1432 630 Z" fill="#642616"/>
<path d="M1378 520 Q1408 555 1418 600 Q1426 645 1424 690 Q1416 650 1408 610 Q1398 565 1370 522 Z" fill="#7a3420"/>
<!-- eyebrows -->
<path d="M1270.3 571.3 Q1290 563.0 1325 580 Q1290 573.0 1270.3 574.0999999999999 Z" fill="#8a4a2c" opacity="0.9"/><path d="M1272.3 571.8 Q1290 567 1324 580" fill="none" stroke="#8a4a2c" stroke-width="2.4" stroke-linecap="round" opacity="0.9"/><path d="M1366.4 582.3 Q1390 571.7 1406.3 574.2 Q1390 581.7 1366.4 585.0999999999999 Z" fill="#8a4a2c" opacity="0.9"/><path d="M1368.4 582.8 Q1390 575.7 1405.3 574.2" fill="none" stroke="#8a4a2c" stroke-width="2.4" stroke-linecap="round" opacity="0.9"/>
<!-- eyes -->
<clipPath id="e31"><path d="M1274 596.5 Q1297.0 583.8 1320 604 Q1299.0 615.8 1274 596.5 Z"/></clipPath><ellipse cx="1297.0" cy="591.0" rx="26.7" ry="7" fill="url(#eyesh)"/><path d="M1274 596.5 Q1297.0 583.8 1320 604 Q1299.0 615.8 1274 596.5 Z" fill="#e9e6de"/><g clip-path="url(#e31)"><circle cx="1299.2" cy="600.8" r="8.5" fill="#6a9a58"/><circle cx="1299.2" cy="600.8" r="3.6" fill="#1c1c10"/><circle cx="1301.8" cy="597.8" r="1.5" fill="#fff" opacity=".8"/></g><path d="M1274 596.5 Q1297.0 583.8 1320 604" fill="none" stroke="#1a1410" stroke-width="2.6" stroke-linecap="round"/><clipPath id="e32"><path d="M1369.4 608 Q1389.8 590.0 1411 604 Q1389.8 616.0 1369.4 608 Z"/></clipPath><ellipse cx="1390.2" cy="597.0" rx="24.1" ry="7" fill="url(#eyesh)"/><path d="M1369.4 608 Q1389.8 590.0 1411 604 Q1389.8 616.0 1369.4 608 Z" fill="#e9e6de"/><g clip-path="url(#e32)"><circle cx="1388.6" cy="605.3" r="8.5" fill="#6a9a58"/><circle cx="1388.6" cy="605.3" r="3.6" fill="#1c1c10"/><circle cx="1391.1" cy="602.3" r="1.5" fill="#fff" opacity=".8"/></g><path d="M1369.4 608 Q1389.8 590.0 1411 604" fill="none" stroke="#1a1410" stroke-width="2.6" stroke-linecap="round"/>
<!-- nose -->
<path d="M1334.8 612 Q1333.8 641 1323 658" fill="none" stroke="#b8785c" stroke-width="6" opacity=".16"/><path d="M1350.8 612 Q1351.8 641 1361 658" fill="none" stroke="#b8785c" stroke-width="6" opacity=".16"/><ellipse cx="1342.8" cy="651" rx="11" ry="9" fill="#f4cdb0" opacity=".55"/><path d="M1322 660 Q1324 666 1331 664 Q1342.8 669 1353 664 Q1360 666 1362 660" fill="none" stroke="#8a4a36" stroke-width="2.2" opacity=".8"/><ellipse cx="1330" cy="663" rx="4" ry="2" fill="#6a3020" opacity=".55"/><ellipse cx="1354" cy="663" rx="4" ry="2" fill="#6a3020" opacity=".55"/>
<!-- lips -->
<path d="M1308.8 688 Q1339.8 690.8 1370.9 689.5 Q1362.9 707.3 1339.8 707.3 Q1316.8 707.3 1308.8 688 Z" fill="#cc140c"/><path d="M1308.8 688 Q1319.2 683.3 1329.5 684.3 Q1334.8 684.3 1340 686.5 Q1345.8 684.3 1351.6 684.3 Q1361.2 683.3 1370.9 689.5 Q1339.8 692.2 1308.8 688 Z" fill="#9c140c"/><path d="M1308.8 688 Q1339.8 692.2 1370.9 689.5" fill="none" stroke="#5a0806" stroke-width="1.6"/>
<!-- hat -->
<path d="M1233 525 A112 121 0 0 1 1457 525 L1454 570 C1420 538 1385 517 1345 517 C1300 517 1262 535 1234 561 Z" fill="url(#p3hat)"/>
<g clip-path="url(#p3hatclip)" stroke="#7a6428" stroke-width="1.4" opacity="0.28" fill="none"><path d="M1228.0 575 Q1251.4 463.9 1304.0 399"/><path d="M1232.5 575 Q1255.0 463.9 1305.6 399"/><path d="M1237.0 575 Q1258.6 463.9 1307.2 399"/><path d="M1241.5 575 Q1262.2 463.9 1308.8 399"/><path d="M1246.0 575 Q1265.8 463.9 1310.3 399"/><path d="M1250.5 575 Q1269.4 463.9 1311.9 399"/><path d="M1255.0 575 Q1273.0 463.9 1313.5 399"/><path d="M1259.5 575 Q1276.6 463.9 1315.1 399"/><path d="M1264.0 575 Q1280.2 463.9 1316.7 399"/><path d="M1268.5 575 Q1283.8 463.9 1318.2 399"/><path d="M1273.0 575 Q1287.4 463.9 1319.8 399"/><path d="M1277.5 575 Q1291.0 463.9 1321.4 399"/><path d="M1282.0 575 Q1294.6 463.9 1323.0 399"/><path d="M1286.5 575 Q1298.2 463.9 1324.5 399"/><path d="M1291.0 575 Q1301.8 463.9 1326.1 399"/><path d="M1295.5 575 Q1305.4 463.9 1327.7 399"/><path d="M1300.0 575 Q1309.0 463.9 1329.2 399"/><path d="M1304.5 575 Q1312.6 463.9 1330.8 399"/><path d="M1309.0 575 Q1316.2 463.9 1332.4 399"/><path d="M1313.5 575 Q1319.8 463.9 1334.0 399"/><path d="M1318.0 575 Q1323.4 463.9 1335.5 399"/><path d="M1322.5 575 Q1327.0 463.9 1337.1 399"/><path d="M1327.0 575 Q1330.6 463.9 1338.7 399"/><path d="M1331.5 575 Q1334.2 463.9 1340.3 399"/><path d="M1336.0 575 Q1337.8 463.9 1341.8 399"/><path d="M1340.5 575 Q1341.4 463.9 1343.4 399"/><path d="M1345.0 575 Q1345.0 463.9 1345.0 399"/><path d="M1349.5 575 Q1348.6 463.9 1346.6 399"/><path d="M1354.0 575 Q1352.2 463.9 1348.2 399"/><path d="M1358.5 575 Q1355.8 463.9 1349.7 399"/><path d="M1363.0 575 Q1359.4 463.9 1351.3 399"/><path d="M1367.5 575 Q1363.0 463.9 1352.9 399"/><path d="M1372.0 575 Q1366.6 463.9 1354.5 399"/><path d="M1376.5 575 Q1370.2 463.9 1356.0 399"/><path d="M1381.0 575 Q1373.8 463.9 1357.6 399"/><path d="M1385.5 575 Q1377.4 463.9 1359.2 399"/><path d="M1390.0 575 Q1381.0 463.9 1360.8 399"/><path d="M1394.5 575 Q1384.6 463.9 1362.3 399"/><path d="M1399.0 575 Q1388.2 463.9 1363.9 399"/><path d="M1403.5 575 Q1391.8 463.9 1365.5 399"/><path d="M1408.0 575 Q1395.4 463.9 1367.0 399"/><path d="M1412.5 575 Q1399.0 463.9 1368.6 399"/><path d="M1417.0 575 Q1402.6 463.9 1370.2 399"/><path d="M1421.5 575 Q1406.2 463.9 1371.8 399"/><path d="M1426.0 575 Q1409.8 463.9 1373.3 399"/><path d="M1430.5 575 Q1413.4 463.9 1374.9 399"/><path d="M1435.0 575 Q1417.0 463.9 1376.5 399"/><path d="M1439.5 575 Q1420.6 463.9 1378.1 399"/><path d="M1444.0 575 Q1424.2 463.9 1379.7 399"/><path d="M1448.5 575 Q1427.8 463.9 1381.2 399"/><path d="M1453.0 575 Q1431.4 463.9 1382.8 399"/><path d="M1457.5 575 Q1435.0 463.9 1384.4 399"/></g>
<g clip-path="url(#p3hatclip)"><g filter="url(#soft3)"><path d="M1236 548 C1265 522 1300 508 1345 508 C1385 508 1420 528 1456 558" fill="none" stroke="#a08c46" stroke-width="16" opacity=".4"/></g></g>
<g clip-path="url(#p3hatclip)"><g filter="url(#soft3)"><ellipse cx="1345" cy="445" rx="72" ry="36" fill="#dcc888" opacity=".3"/></g></g>
<path d="M1236 556 C1265 532 1300 518 1345 518 C1385 518 1420 538 1452 566" fill="none" stroke="#5a4616" stroke-width="3" opacity=".6"/>
</svg>
<!--/PORTRAITS-->

</body></html>
